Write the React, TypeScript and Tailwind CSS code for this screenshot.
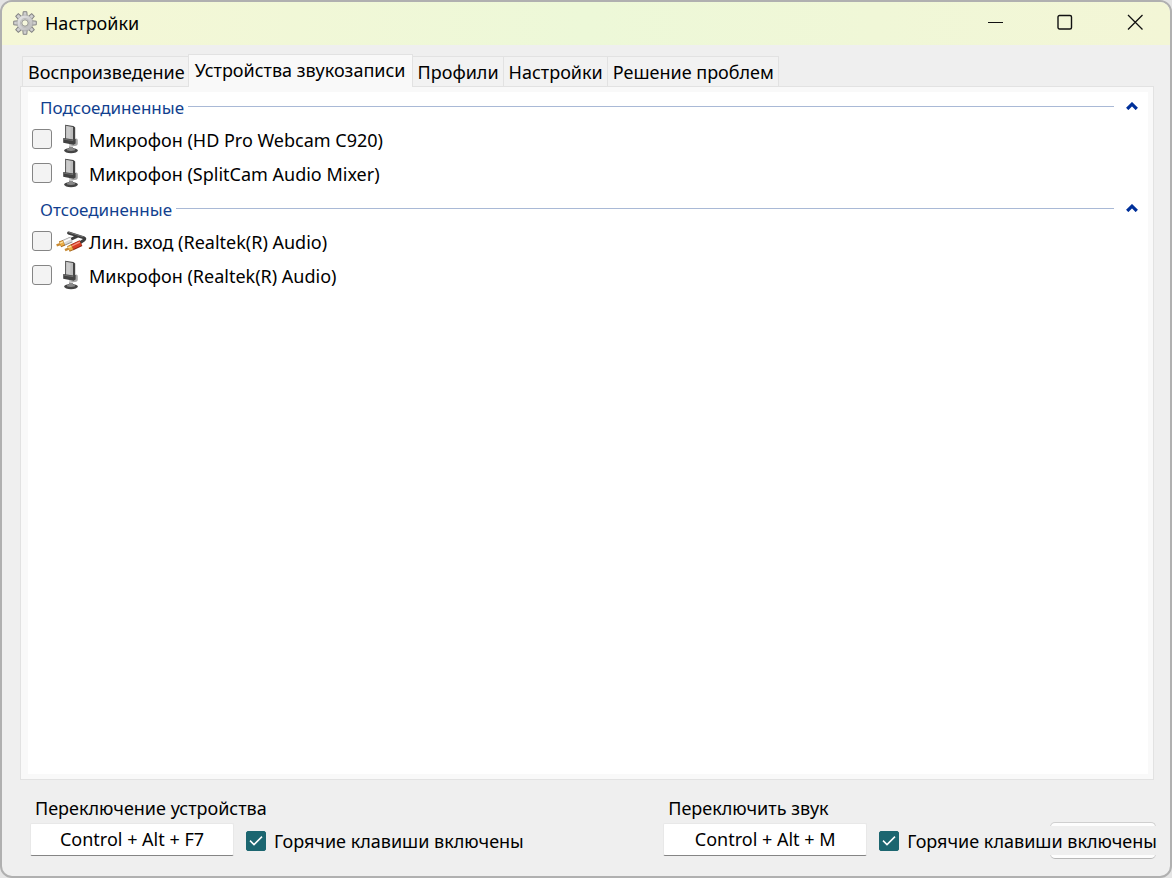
import { useState } from "react";

type IconKind = "mic" | "line";

interface Device {
  id: string;
  name: string;
  icon: IconKind;
}

interface DeviceGroupProps {
  title: string;
  devices: Device[];
}

interface HotkeyProps {
  id: string;
  label: string;
  value: string;
}

const TABS = [
  "Воспроизведение",
  "Устройства звукозаписи",
  "Профили",
  "Настройки",
  "Решение проблем",
];

const CONNECTED: Device[] = [
  { id: "c920", name: "Микрофон (HD Pro Webcam C920)", icon: "mic" },
  { id: "splitcam", name: "Микрофон (SplitCam Audio Mixer)", icon: "mic" },
];

const DISCONNECTED: Device[] = [
  { id: "line-in", name: "Лин. вход (Realtek(R) Audio)", icon: "line" },
  { id: "realtek-mic", name: "Микрофон (Realtek(R) Audio)", icon: "mic" },
];

function GearIcon() {
  const teeth = [0, 45, 90, 135, 180, 225, 270, 315];
  return (
    <svg className="mb-0.5 h-6 w-6" viewBox="0 0 24 24" aria-hidden="true">
      <defs>
        <linearGradient id="gear" x1="0" y1="0" x2="1" y2="1">
          <stop offset="0" stopColor="#ececec" />
          <stop offset="1" stopColor="#b4b4b4" />
        </linearGradient>
      </defs>
      {teeth.map((a) => (
        <path
          key={a}
          d="M9.8 5 10.2.7h3.6L14.2 5Z"
          transform={`rotate(${a} 12 12)`}
          fill="#d0d0d0"
          stroke="#858585"
          strokeWidth="1"
        />
      ))}
      <circle cx="12" cy="12" r="8" fill="url(#gear)" stroke="#a0a0a0" strokeWidth=".5" />
      <circle cx="12" cy="12" r="4.6" fill="none" stroke="#bdbdbd" />
      <circle cx="12" cy="12" r="3.2" fill="#f5f7dc" stroke="#8a8a8a" strokeWidth=".9" />
    </svg>
  );
}

function MicIcon() {
  return (
    <svg className="h-8 w-8" viewBox="0 0 32 32" aria-hidden="true">
      <ellipse cx="15" cy="26.6" rx="6.8" ry="2.6" fill="#444" />
      <ellipse cx="15" cy="25.8" rx="4.2" ry="1.1" fill="#888" />
      <path d="M13 20.6h4v5h-4z" fill="#8a8a8a" />
      <path d="M17 15.4 20.4 14.6q1.4.2 1.4 1.8v3.4q0 1.6-1.6 2l-3.2.4z" fill="#a6a6a6" />
      <path d="M9.2.8 17.4 2 19.2 3.4V16L9 15z" fill="#444" />
      <path d="M10 1.8 17 3v13l-7.2-1z" fill="#bcbcbc" />
      <path d="M10.8 2.6l3.8.7-.4 11.2-3.8-.4z" fill="#cbcbcb" />
      <path d="M7.2 14 17.4 15.6 19.6 15v4.4l-2.2 1.4L7.2 18.8z" fill="#424242" />
      <path d="M7.6 15.1l9.6 1.5" stroke="#777" strokeWidth=".8" />
      <path d="M13 21.8l4 .6" stroke="#e0e0e0" strokeWidth="1.4" />
    </svg>
  );
}

function LineInIcon() {
  return (
    <svg className="h-8 w-8" viewBox="0 0 32 32" aria-hidden="true">
      <g fill="none" strokeLinecap="round" strokeLinejoin="round">
        <path
          d="M12.6 7 27.4 11.6q2.6 1.2.4 2.6L23.6 17M15.6 13l5.4-2.6"
          stroke="#3c3c3c"
          strokeWidth="3"
        />
        <path d="M13 6.4 27 10.8" stroke="#858585" strokeWidth=".8" />
      </g>
      <g fill="none">
        <path d="M7.4 17 15.4 13.6" stroke="#909090" strokeWidth="6" />
        <path d="M7.6 16.6 15.2 13.4" stroke="#dadada" strokeWidth="4.6" />
        <path d="M7.4 15.8 14.8 12.7" stroke="#fff" strokeWidth="1.4" />
        <path d="M4 18.4 8 16.8" stroke="#a8691c" strokeWidth="6" />
        <path d="M4.2 18.1 7.6 16.7" stroke="#edae45" strokeWidth="4.4" />
        <path d="M.6 19.4 4.2 18.1" stroke="#c98a32" strokeWidth="2.4" />
        <path d="M3.8 17.2 7.2 15.8" stroke="#ffe6a8" strokeWidth="1.2" />
      </g>
      <g fill="none">
        <path d="M16 21.4 25 17.2" stroke="#8c2213" strokeWidth="6.4" />
        <path d="M16.2 21 24.6 17" stroke="#d93d24" strokeWidth="5" />
        <path d="M15.8 20 23.8 16.2" stroke="#f59682" strokeWidth="1.3" />
        <path d="M12.4 23 16.4 21.2" stroke="#a8691c" strokeWidth="6.2" />
        <path d="M12.6 22.7 16 21.1" stroke="#edae45" strokeWidth="4.6" />
        <path d="M9 24.2 12.6 22.7" stroke="#c98a32" strokeWidth="2.4" />
        <path d="M12.2 21.7 15.4 20.3" stroke="#ffe6a8" strokeWidth="1.2" />
      </g>
    </svg>
  );
}

function DeviceGroup({ title, devices }: DeviceGroupProps) {
  const [open, setOpen] = useState(true);

  return (
    <section>
      <div className="flex h-8 items-center gap-1 pr-1.5 pl-3">
        <h2 className="text-[17px] leading-6 text-[#123f8f]">{title}</h2>
        <div className="mb-1 h-px flex-1 bg-[#a9b9d6]" />
        <button
          type="button"
          aria-label={title}
          aria-expanded={open}
          onClick={() => setOpen(!open)}
          className="mb-1 ml-1 flex h-4 w-5 items-center justify-center"
        >
          <svg className="h-2 w-3" viewBox="0 0 12 8" aria-hidden="true">
            <path
              d="M1.2 7 6 2.2 10.8 7"
              fill="none"
              stroke="#00309a"
              strokeWidth="3.2"
            />
          </svg>
        </button>
      </div>
      {open && (
        <ul>
          {devices.map((d) => (
            <li key={d.id} className="flex h-[34px] items-center pb-0.5 pl-1">
              <input
                id={d.id}
                type="checkbox"
                className="mb-0.5 h-5 w-5 appearance-none rounded-[3px] border border-[#858585] bg-[#f3f3f3] checked:bg-[#1c6670]"
              />
              <label htmlFor={d.id} className="flex items-center pl-1">
                {d.icon === "mic" ? <MicIcon /> : <LineInIcon />}
                <span className="pl-px text-[18px] leading-6">{d.name}</span>
              </label>
            </li>
          ))}
        </ul>
      )}
    </section>
  );
}

function Hotkey({ id, label, value }: HotkeyProps) {
  const [enabled, setEnabled] = useState(true);

  return (
    <div>
      <label htmlFor={id} className="block pl-[5px] text-[18px] leading-7">
        {label}
      </label>
      <div className="mt-px flex items-center">
        <input
          id={id}
          type="text"
          readOnly
          value={value}
          className="h-[33px] w-[204px] rounded-xs border border-[#e8e8e8] border-b-[#858585] bg-white pb-0.5 text-center text-[18px] outline-none"
        />
        <label className="relative z-10 mt-0.5 ml-3 flex h-[29px] items-center gap-2 bg-[#efefef] text-[18px] leading-7 whitespace-nowrap">
          <span className="grid h-5 w-5 place-items-center">
            <input
              type="checkbox"
              checked={enabled}
              onChange={(e) => setEnabled(e.target.checked)}
              className="peer col-start-1 row-start-1 h-5 w-5 appearance-none rounded-xs border border-[#1c6670] checked:bg-[#1c6670]"
            />
            <svg
              className="pointer-events-none col-start-1 row-start-1 hidden h-5 w-5 peer-checked:block"
              viewBox="0 0 20 20"
              aria-hidden="true"
            >
              <path d="M4 9.6 8 13.6 16 5.6" fill="none" stroke="#fff" strokeWidth="1.5" />
            </svg>
          </span>
          Горячие клавиши включены
        </label>
      </div>
    </div>
  );
}

export default function App() {
  const [tab, setTab] = useState(1);

  return (
    <div className="flex min-h-screen bg-[#e4e4e4] font-['Noto_Sans','Open_Sans',sans-serif] text-black">
      <div className="flex flex-1 flex-col overflow-hidden rounded-xl border-2 border-[#b0b0b0] bg-[#efefef]">
        <header className="flex h-[43px] items-center bg-linear-to-r from-[#f5f7d6] via-[#edf8d8] to-[#f3f6d6] pl-[11px]">
          <GearIcon />
          <h1 className="flex-1 pb-0.5 pl-2 text-[18px] leading-6">Настройки</h1>
          <div className="flex h-full pb-[3px]">
            <button type="button" aria-label="Свернуть" className="flex w-[70px] items-center justify-center">
              <svg className="h-4 w-4" viewBox="0 0 16 16" aria-hidden="true">
                <path d="M1 8.5h15" stroke="#111" />
              </svg>
            </button>
            <button type="button" aria-label="Развернуть" className="flex w-[70px] items-center justify-center">
              <svg className="h-4 w-4" viewBox="0 0 16 16" aria-hidden="true">
                <rect x="1" y="1.5" width="13.5" height="13.5" rx="1.5" fill="none" stroke="#111" strokeWidth="1.4" />
              </svg>
            </button>
            <button type="button" aria-label="Закрыть" className="flex w-[70px] items-center justify-center">
              <svg className="h-4 w-4" viewBox="0 0 16 16" aria-hidden="true">
                <path d="M1 1l14.5 14.5M15.5 1 1 15.5" stroke="#111" strokeWidth="1.3" />
              </svg>
            </button>
          </div>
        </header>

        <main className="flex flex-1 flex-col pt-[9px] pr-4 pb-5 pl-[18px]">
          <div role="tablist" className="flex items-end">
            {TABS.map((name, i) => (
              <button
                key={name}
                type="button"
                role="tab"
                aria-selected={i === tab}
                onClick={() => setTab(i)}
                className={
                  i === tab
                    ? "z-10 -mb-px h-[33px] border border-b-0 border-[#e2e2e2] bg-[#f9f9f9] px-[6px] pb-0.5 text-[18px] leading-6 whitespace-nowrap"
                    : "h-[30px] border border-b-0 border-l-0 border-[#e2e2e2] bg-[#f2f2f2] pr-1 pl-[5px] text-[18px] leading-6 whitespace-nowrap first:ml-0.5 first:border-r-0 first:border-l first:pr-[3px]"
                }
              >
                {name}
              </button>
            ))}
          </div>

          <div role="tabpanel" className="flex flex-1 flex-col border border-[#e2e2e2] bg-[#f9f9f9] py-[5px] pr-[5px] pl-[7px]">
            <div className="flex flex-1 flex-col gap-0.5 bg-white">
              <DeviceGroup title="Подсоединенные" devices={CONNECTED} />
              <DeviceGroup title="Отсоединенные" devices={DISCONNECTED} />
            </div>
          </div>

          <footer className="relative mt-[14px] -mr-[3px] flex justify-between pl-[10px]">
            <Hotkey id="switch-device" label="Переключение устройства" value="Control + Alt + F7" />
            <Hotkey id="switch-mute" label="Переключить звук" value="Control + Alt + M" />
            <button
              type="button"
              aria-label="Закрыть окно"
              className="absolute right-px -bottom-[3px] h-[37px] w-[106px] rounded-[5px] border border-[#cfcfcf] border-b-[#b8b8b8] bg-[#fdfdfd]"
            />
          </footer>
        </main>
      </div>
    </div>
  );
}
